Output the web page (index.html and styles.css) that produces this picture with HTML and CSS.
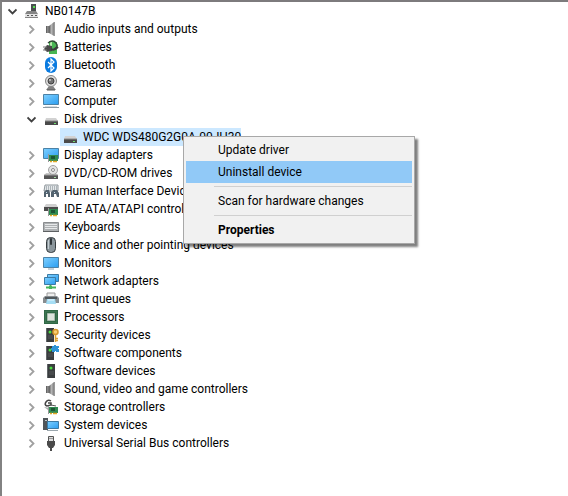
FILE: index.html
```html
<!DOCTYPE html>
<html lang="en">
<head>
  <meta charset="UTF-8">
  <title>Device Manager</title>
  <link rel="stylesheet" href="styles.css">
</head>
<body>

  <!-- shapes used by more than one row -->
  <svg class="defs" aria-hidden="true">
    <defs>
      <linearGradient id="screen" x1="0" y1="0" x2="1" y2="1">
        <stop offset="0" stop-color="#7fd0ff"/>
        <stop offset="1" stop-color="#2a9df0"/>
      </linearGradient>
      <linearGradient id="metal" x1="0" y1="0" x2="1" y2="0">
        <stop offset="0" stop-color="#5e5e5e"/>
        <stop offset="0.5" stop-color="#b4b4b4"/>
        <stop offset="1" stop-color="#808080"/>
      </linearGradient>
      <symbol id="chevron-right" viewBox="0 0 9 9"><path d="M2.5 0.5L6.5 4.5L2.5 8.5" fill="none" stroke="#a0a0a0" stroke-width="1.8"/></symbol>
      <symbol id="chevron-down" viewBox="0 0 9 9"><path d="M0.5 2.5L4.5 6.5L8.5 2.5" fill="none" stroke="#404040" stroke-width="1.8"/></symbol>
      <symbol id="speaker" viewBox="0 0 16 16">
        <path d="M3 5h3v7H3z" fill="#8a8a8a"/>
        <path d="M6 5l5-4v14l-5-3z" fill="url(#metal)"/>
        <path d="M3.5 5v7M6 5v7" stroke="#666" fill="none"/>
        <path d="M11.5 1v14" stroke="#999"/>
      </symbol>
      <symbol id="disk" viewBox="0 0 16 16">
        <path d="M3 7h10l2 3H2z" fill="#d2d2d2"/>
        <path d="M2 10h13v4H2z" fill="#4a4a4a"/>
        <path d="M2 10h13" stroke="#8a8a8a"/>
        <path d="M11 12h2v1h-2z" fill="#6fe06f"/>
      </symbol>
      <symbol id="tower" viewBox="0 0 16 16">
        <path d="M4 1h8v14H4z" fill="#3a3d3f"/>
        <path d="M4.5 1v14" stroke="#626769"/>
        <path d="M6 9h5M6 11h5" stroke="#55595b"/>
        <circle cx="8" cy="5" r="1.5" fill="#49dc3f"/>
      </symbol>
      <symbol id="board" viewBox="0 0 16 16">
        <path d="M6 8h9v6H6z" fill="#2f8a50"/>
        <path d="M8 9h4v3H8z" fill="#1d5534"/>
        <path d="M7 14.5h2M10 14.5h4" stroke="#e3a928" stroke-width="1.5"/>
        <path d="M5.5 7v8" stroke="#999"/>
      </symbol>
    </defs>
  </svg>

  <main class="tree-pane">
    <ul class="tree">
      <li>
        <div class="row">
          <button class="toggle" aria-label="Collapse NB0147B"><svg><use href="#chevron-down"/></svg></button>
          <svg class="icon" viewBox="0 0 16 16"><path d="M7 1h5v8H7z" fill="#4b4e50"/><path d="M9 3h2v2H9z" fill="#54e04c"/><path d="M3 8h9l2 3v4H1v-4z" fill="#858585"/><path d="M1 11h13v3H1z" fill="#e2e2e2"/><path d="M3 12h2v1H3zM7 12h2v1H7zM11 12h2v1h-2z" fill="#555"/></svg>
          <span class="label">NB0147B</span>
        </div>
        <ul>
          <li>
            <div class="row">
              <button class="toggle" aria-label="Expand Audio inputs and outputs"><svg><use href="#chevron-right"/></svg></button>
              <svg class="icon"><use href="#speaker"/></svg>
              <span class="label">Audio inputs and outputs</span>
            </div>
          </li>
          <li>
            <div class="row">
              <button class="toggle" aria-label="Expand Batteries"><svg><use href="#chevron-right"/></svg></button>
              <svg class="icon" viewBox="0 0 16 16"><path d="M6 2h6v1h2v12H6z" fill="#49b653"/><path d="M7 3h2v8H7z" fill="#b5ebaa"/><path d="M5 4q5-4 8 0t-2 6" fill="none" stroke="#334b36" stroke-width="1.5"/><path d="M4 6l5 1v5l-5 1-3-3z" fill="#494949"/><path d="M0 8h4M0 11h4" stroke="#777"/><path d="M8 10q3 2 7-2" fill="none" stroke="#3c3c3c" stroke-width="2"/></svg>
              <span class="label">Batteries</span>
            </div>
          </li>
          <li>
            <div class="row">
              <button class="toggle" aria-label="Expand Bluetooth"><svg><use href="#chevron-right"/></svg></button>
              <svg class="icon" viewBox="0 0 16 16"><rect x="2" y="0" width="12" height="16" rx="6" fill="#0a7be0"/><path d="M5 5l6 6-3 3V2l3 3-6 6" fill="none" stroke="#fff" stroke-width="1.2"/></svg>
              <span class="label">Bluetooth</span>
            </div>
          </li>
          <li>
            <div class="row">
              <button class="toggle" aria-label="Expand Cameras"><svg><use href="#chevron-right"/></svg></button>
              <svg class="icon" viewBox="0 0 16 16"><path d="M6 11h4l3 4H3z" fill="#828282"/><circle cx="8" cy="6" r="5.5" fill="#ddd" stroke="#858585"/><circle cx="8" cy="6" r="3" fill="#737373" stroke="#3e3e3e"/><circle cx="7" cy="5" r="1" fill="#c8c8c8"/><path d="M4 15h8" stroke="#555"/></svg>
              <span class="label">Cameras</span>
            </div>
          </li>
          <li>
            <div class="row">
              <button class="toggle" aria-label="Expand Computer"><svg><use href="#chevron-right"/></svg></button>
              <svg class="icon" viewBox="0 0 16 16"><path d="M0.5 1.5h15v10H0.5z" fill="url(#screen)" stroke="#4c82a6"/><path d="M0 14.5h16" stroke="#8d9ba4"/><path d="M2 13.5h12" stroke="#d6dde1"/></svg>
              <span class="label">Computer</span>
            </div>
          </li>
          <li>
            <div class="row">
              <button class="toggle" aria-label="Collapse Disk drives"><svg><use href="#chevron-down"/></svg></button>
              <svg class="icon"><use href="#disk"/></svg>
              <span class="label">Disk drives</span>
            </div>
            <ul>
              <li class="menu-anchor">
                <div class="row">
                  <span class="toggle"></span>
                  <span class="selected">
                    <svg class="icon"><use href="#disk"/></svg>
                    <span class="label">WDC WDS480G2G0A-00JH30</span>
                  </span>
                </div>
                <div class="context-menu" role="menu">
                  <button role="menuitem">Update driver</button>
                  <button role="menuitem" class="active">Uninstall device</button>
                  <hr>
                  <button role="menuitem">Scan for hardware changes</button>
                  <hr>
                  <button role="menuitem" class="default">Properties</button>
                </div>
              </li>
            </ul>
          </li>
          <li>
            <div class="row">
              <button class="toggle" aria-label="Expand Display adapters"><svg><use href="#chevron-right"/></svg></button>
              <svg class="icon" viewBox="0 0 16 16"><path d="M0.5 1.5h15v10H0.5z" fill="url(#screen)" stroke="#4c82a6"/><use href="#board" width="16" height="16"/></svg>
              <span class="label">Display adapters</span>
            </div>
          </li>
          <li>
            <div class="row">
              <button class="toggle" aria-label="Expand DVD/CD-ROM drives"><svg><use href="#chevron-right"/></svg></button>
              <svg class="icon" viewBox="0 0 16 16"><path d="M3 8h10l2 3H1z" fill="#c9c9c9"/><circle cx="10" cy="5" r="4.5" fill="#e4e4e4" stroke="#a2a2a2"/><circle cx="10" cy="5" r="1.5" fill="#fff" stroke="#888"/><path d="M1 10h14v4H1z" fill="#555"/><path d="M1 10h14" stroke="#999"/><path d="M11 12h2v1h-2z" fill="#a4dba4"/></svg>
              <span class="label">DVD/CD-ROM drives</span>
            </div>
          </li>
          <li>
            <div class="row">
              <button class="toggle" aria-label="Expand Human Interface Devices"><svg><use href="#chevron-right"/></svg></button>
              <svg class="icon" viewBox="0 0 16 16"><path d="M2 2h13v6H1z" fill="#e5e8ea" stroke="#8e969b"/><path d="M3 4h11M3 6h11" stroke="#77838a" stroke-dasharray="1 1"/><path d="M1 14V9l2-2h3l1 3v4H5v-3H3v3z" fill="#53636f"/><path d="M8 14V9l2-2h4l2 3v4h-2l-1-3h-2v3z" fill="#53636f"/><path d="M3 9h1v1H3zM11 9h1v1h-1z" fill="#c2d9e8"/></svg>
              <span class="label">Human Interface Devices</span>
            </div>
          </li>
          <li>
            <div class="row">
              <button class="toggle" aria-label="Expand IDE ATA/ATAPI controllers"><svg><use href="#chevron-right"/></svg></button>
              <svg class="icon" viewBox="0 0 16 16"><path d="M3 3h10l2 3H1z" fill="#d0d0d0"/><path d="M1 6h14v4H1z" fill="#4c4c4c"/><use href="#board" width="16" height="16"/></svg>
              <span class="label">IDE ATA/ATAPI controllers</span>
            </div>
          </li>
          <li>
            <div class="row">
              <button class="toggle" aria-label="Expand Keyboards"><svg><use href="#chevron-right"/></svg></button>
              <svg class="icon" viewBox="0 0 16 16"><path d="M0.5 3.5h15v9H0.5z" fill="#aeb1b3" stroke="#8a8d8f"/><path d="M2 5.5h12M2 7.5h12M2 9.5h12" stroke="#e6e8e9"/><path d="M0 12.5h16" stroke="#5d6062"/></svg>
              <span class="label">Keyboards</span>
            </div>
          </li>
          <li>
            <div class="row">
              <button class="toggle" aria-label="Expand Mice and other pointing devices"><svg><use href="#chevron-right"/></svg></button>
              <svg class="icon" viewBox="0 0 16 16"><rect x="3.5" y="0.5" width="9" height="15" rx="4" fill="#8b969c" stroke="#373d40"/><path d="M5.5 3v9" stroke="#c5ced3"/><rect x="7" y="1" width="2" height="7" rx="1" fill="#30363a"/></svg>
              <span class="label">Mice and other pointing devices</span>
            </div>
          </li>
          <li>
            <div class="row">
              <button class="toggle" aria-label="Expand Monitors"><svg><use href="#chevron-right"/></svg></button>
              <svg class="icon" viewBox="0 0 16 16"><path d="M0.5 2.5h15v10H0.5z" fill="url(#screen)" stroke="#4c82a6"/><path d="M5 14h6" stroke="#8fa3b0"/></svg>
              <span class="label">Monitors</span>
            </div>
          </li>
          <li>
            <div class="row">
              <button class="toggle" aria-label="Expand Network adapters"><svg><use href="#chevron-right"/></svg></button>
              <svg class="icon" viewBox="0 0 16 16"><path d="M4.5 1.5h11v7h-11z" fill="url(#screen)" stroke="#3c7ba5"/><path d="M1.5 4.5h11v7h-11z" fill="url(#screen)" stroke="#3c7ba5"/><path d="M7.5 12v2M3 14.5h10" stroke="#46b55c" stroke-width="2"/><path d="M6 13h3v3H6z" fill="#46b55c"/></svg>
              <span class="label">Network adapters</span>
            </div>
          </li>
          <li>
            <div class="row">
              <button class="toggle" aria-label="Expand Print queues"><svg><use href="#chevron-right"/></svg></button>
              <svg class="icon" viewBox="0 0 16 16"><path d="M4 2h8v4H4z" fill="#eee" stroke="#999"/><path d="M2 5h12l2 2v5H0V7z" fill="#878c8f"/><path d="M2 6h12v2H2z" fill="#50585c"/><path d="M4 8h8l1 5H3z" fill="#a6def5"/><path d="M5 9h6" stroke="#e5f7ff"/></svg>
              <span class="label">Print queues</span>
            </div>
          </li>
          <li>
            <div class="row">
              <button class="toggle" aria-label="Expand Processors"><svg><use href="#chevron-right"/></svg></button>
              <svg class="icon" viewBox="0 0 16 16"><path d="M1 1h14v14H1z" fill="#2f6845"/><path d="M2.5 2.5h11v11h-11z" fill="none" stroke="#4f8262" stroke-dasharray="1 1"/><path d="M4.5 4.5h7v7h-7z" fill="#dce4dd" stroke="#a9bcae"/></svg>
              <span class="label">Processors</span>
            </div>
          </li>
          <li>
            <div class="row">
              <button class="toggle" aria-label="Expand Security devices"><svg><use href="#chevron-right"/></svg></button>
              <svg class="icon" viewBox="0 0 16 16"><use href="#tower" x="-1" width="16" height="16"/><circle cx="12.5" cy="5" r="2.5" fill="#f8ce74" stroke="#d6982d" stroke-width="1.5"/><path d="M12.5 8v7M13 11.5h2M13 13.5h2" stroke="#dda031" stroke-width="1.5"/></svg>
              <span class="label">Security devices</span>
            </div>
          </li>
          <li>
            <div class="row">
              <button class="toggle" aria-label="Expand Software components"><svg><use href="#chevron-right"/></svg></button>
              <svg class="icon" viewBox="0 0 16 16"><use href="#tower" x="-1" width="16" height="16"/><path d="M9 1h2V0h2v1h3v2h-1v1h1v3h-3V6h-1v1H9V5H8V3h1z" fill="#2f94d6"/></svg>
              <span class="label">Software components</span>
            </div>
          </li>
          <li>
            <div class="row">
              <button class="toggle" aria-label="Expand Software devices"><svg><use href="#chevron-right"/></svg></button>
              <svg class="icon"><use href="#tower"/></svg>
              <span class="label">Software devices</span>
            </div>
          </li>
          <li>
            <div class="row">
              <button class="toggle" aria-label="Expand Sound, video and game controllers"><svg><use href="#chevron-right"/></svg></button>
              <svg class="icon"><use href="#speaker"/></svg>
              <span class="label">Sound, video and game controllers</span>
            </div>
          </li>
          <li>
            <div class="row">
              <button class="toggle" aria-label="Expand Storage controllers"><svg><use href="#chevron-right"/></svg></button>
              <svg class="icon" viewBox="0 0 16 16"><path d="M8 2q-3-2-5 1t1 4l4-1V4H5" fill="none" stroke="#444" stroke-width="1.5"/><path d="M1 8l6 1 1 3-3-1z" fill="#aaa"/><use href="#board" width="16" height="16"/><path d="M8 6l5 1" stroke="#555"/></svg>
              <span class="label">Storage controllers</span>
            </div>
          </li>
          <li>
            <div class="row">
              <button class="toggle" aria-label="Expand System devices"><svg><use href="#chevron-right"/></svg></button>
              <svg class="icon" viewBox="0 0 16 16"><path d="M0 1h5v12H0z" fill="#50565a"/><path d="M2 3h2v1H2z" fill="#bbc7cd"/><path d="M4.5 4.5h11v7h-11z" fill="url(#screen)" stroke="#3c7ba5"/><path d="M4 13.5h11" stroke="#9aa6ad"/></svg>
              <span class="label">System devices</span>
            </div>
          </li>
          <li>
            <div class="row">
              <button class="toggle" aria-label="Expand Universal Serial Bus controllers"><svg><use href="#chevron-right"/></svg></button>
              <svg class="icon" viewBox="0 0 16 16"><path d="M5.5 1.5h5v5h-5z" fill="#ddd" stroke="#555"/><path d="M7 3v1M9 3v1" stroke="#555"/><path d="M4 6h8v4l-2 3H6l-2-3z" fill="#4a4a4a"/><path d="M8 12v4" stroke="#4a4a4a" stroke-width="2"/></svg>
              <span class="label">Universal Serial Bus controllers</span>
            </div>
          </li>
        </ul>
      </li>
    </ul>
  </main>

</body>
</html>
```
FILE: styles.css
```css
* {
  box-sizing: border-box;
}

body {
  margin: 0;
  background-color: #fff;
  color: #000;
  font-family: Roboto, "Open Sans", sans-serif;
  font-size: 12px;
}

.defs {
  position: absolute;
  width: 0;
  height: 0;
}

.tree-pane {
  min-height: 100vh;
  border-top: 2px solid #7d7b7d;
  border-left: 2px solid #828282;
  overflow: hidden;
}

.tree,
.tree ul {
  margin: 0;
  padding: 0;
  list-style: none;
}

.tree {
  padding-left: 6px;
}

.tree ul {
  padding-left: 19px;
}

.row {
  display: flex;
  align-items: center;
  height: 18px;
  white-space: nowrap;
}

.toggle {
  width: 9px;
  height: 9px;
  margin-right: 7px;
  padding: 0;
  border: none;
  background: none;
}

.toggle svg {
  display: block;
  width: 9px;
  height: 9px;
}

.icon {
  flex: none;
  width: 16px;
  height: 16px;
  margin-right: 5px;
}

.label {
  line-height: 18px;
}

.selected {
  display: flex;
  align-items: center;
  margin-left: -2px;
  padding-left: 2px;
  background-color: #cce8ff;
}

.menu-anchor {
  position: relative;
}

.context-menu {
  position: absolute;
  top: 8px;
  left: 137px;
  z-index: 1;
  width: 232px;
  padding: 2px;
  border: 1px solid #a8a8a8;
  background-color: #f1f1f1;
  box-shadow: 3px 3px 2px rgba(0, 0, 0, 0.5);
}

.context-menu button {
  display: block;
  width: 100%;
  height: 22px;
  padding: 0 0 0 32px;
  border: none;
  background: none;
  color: inherit;
  font: inherit;
  line-height: 22px;
  text-align: left;
}

.context-menu .active {
  background-color: #91c9f7;
}

.context-menu .default {
  font-weight: bold;
}

.context-menu hr {
  margin: 3px 0 3px 28px;
  border: none;
  border-top: 1px solid #d0d0d0;
}
```
